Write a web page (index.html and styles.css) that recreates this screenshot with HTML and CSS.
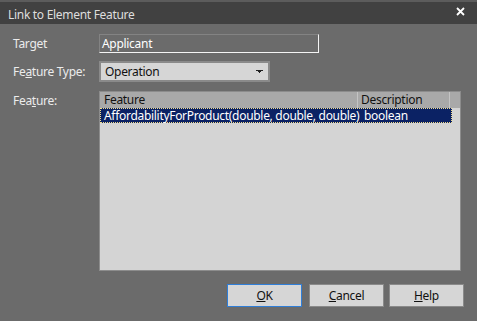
FILE: index.html
```html
<!DOCTYPE html>
<html lang="en">
<head>
    <meta charset="UTF-8">
    <title>Link to Element Feature</title>
    <link rel="stylesheet" href="styles.css">
</head>
<body>

    <div class="dialog">
        <div class="titlebar">
            <span class="title">Link to Element Feature</span>
            <svg class="close" width="9" height="9" viewBox="0 0 9 9">
                <path d="M1 1 L8 8 M8 1 L1 8" stroke="#ffffff" stroke-width="1.8"/>
            </svg>
        </div>

        <div class="form">
            <div class="row row-target">
                <label class="label">Target</label>
                <div class="textbox">Applicant</div>
            </div>

            <div class="row row-type">
                <label class="label">Fe<u>a</u>ture Type:</label>
                <div class="select">
                    <span>Operation</span>
                    <svg class="arrow" width="7" height="4" viewBox="0 0 7 4">
                        <path d="M0 0 H7 V1 H5 V2 H4 V3 H3 V2 H2 V1 H0 Z" fill="#222"/>
                    </svg>
                </div>
            </div>

            <div class="row row-feature">
                <label class="label">Fea<u>t</u>ure:</label>
                <div class="list">
                    <div class="list-header">
                        <div class="col col-feature">Feature</div>
                        <div class="col col-desc">Description</div>
                        <div class="col col-fill"></div>
                    </div>
                    <div class="list-row selected">
                        <div class="col col-feature">AffordabilityForProduct(double, double, double)</div>
                        <div class="col col-desc">boolean</div>
                    </div>
                </div>
            </div>

            <div class="buttons">
                <button class="btn default"><u>O</u>K</button>
                <button class="btn"><u>C</u>ancel</button>
                <button class="btn"><u>H</u>elp</button>
            </div>
        </div>
    </div>

</body>
</html>
```

FILE: styles.css
```css
body {
    margin: 0;
    background-color: #6b6b6b;
    font-family: "Noto Sans", "Open Sans", sans-serif;
    font-size: 12px;
    letter-spacing: -0.3px;
    color: #ececec;
}
.dialog {
    width: 477px;
    height: 321px;
    overflow: hidden;
}
.titlebar {
    height: 22px;
    border-top: 2px solid #5c5c5c;
    background: #414141;
    display: flex;
    align-items: center;
    justify-content: space-between;
    padding: 0 12px 0 8px;
}
.title {
    color: #dedede;
    padding-top: 2px;
}
.close {
    margin-bottom: 4px;
}
.form {
    padding: 10px 0 0 13px;
}
.row {
    display: flex;
    align-items: center;
}
.label {
    width: 86px;
    flex-shrink: 0;
}
.textbox {
    width: 216px;
    height: 17px;
    line-height: 17px;
    padding-left: 2px;
    border-top: 1px solid #838383;
    border-left: 1px solid #838383;
    border-right: 1px solid #f4f4f4;
    border-bottom: 1px solid #f4f4f4;
    color: #ffffff;
}
.row-type {
    margin-top: 8px;
}
.select {
    width: 158px;
    height: 17px;
    padding: 0 5px 0 4px;
    background: #d6d6d6;
    border: 2px solid #8a8a8a;
    color: #111;
    display: flex;
    align-items: center;
    justify-content: space-between;
}
.arrow {
    margin-top: 1px;
}
.row-feature {
    margin-top: 9px;
    align-items: flex-start;
}
.row-feature .label {
    margin-top: 1px;
}
.list {
    width: 360px;
    height: 178px;
    background: #d4d4d4;
    border: 1px solid #8c8c8c;
    color: #111;
}
.list-header {
    display: flex;
    height: 16px;
    background: #a9a9a9;
}
.list-header .col {
    border-right: 1px solid #c4c4c4;
    line-height: 16px;
}
.list-header .col-feature {
    width: 253px;
    padding-left: 4px;
}
.list-header .col-desc {
    width: 88px;
    padding-left: 3px;
}
.list-header .col-fill {
    flex: 1;
    border-right: none;
}
.list-row {
    display: flex;
    width: 350px;
    height: 13px;
    line-height: 13px;
    white-space: nowrap;
}
.selected {
    background: #0b2264;
    color: #ffffff;
    border: 1px dotted #f2dc8a;
}
.list-row .col-feature {
    width: 256px;
    padding-left: 3px;
}
.list-row .col-desc {
    padding-left: 4px;
}
.buttons {
    display: flex;
    gap: 7px;
    margin: 13px 0 0 214px;
}
.btn {
    width: 75px;
    height: 23px;
    background: #d6d6d6;
    border: 1px solid #8a8a8a;
    font-family: "Noto Sans", "Open Sans", sans-serif;
    font-size: 12px;
    letter-spacing: -0.3px;
    color: #111;
    padding: 0;
}
.btn.default {
    border-color: #2f7ed8;
}
.btn + .btn + .btn {
    margin-left: -2px;
}
```
